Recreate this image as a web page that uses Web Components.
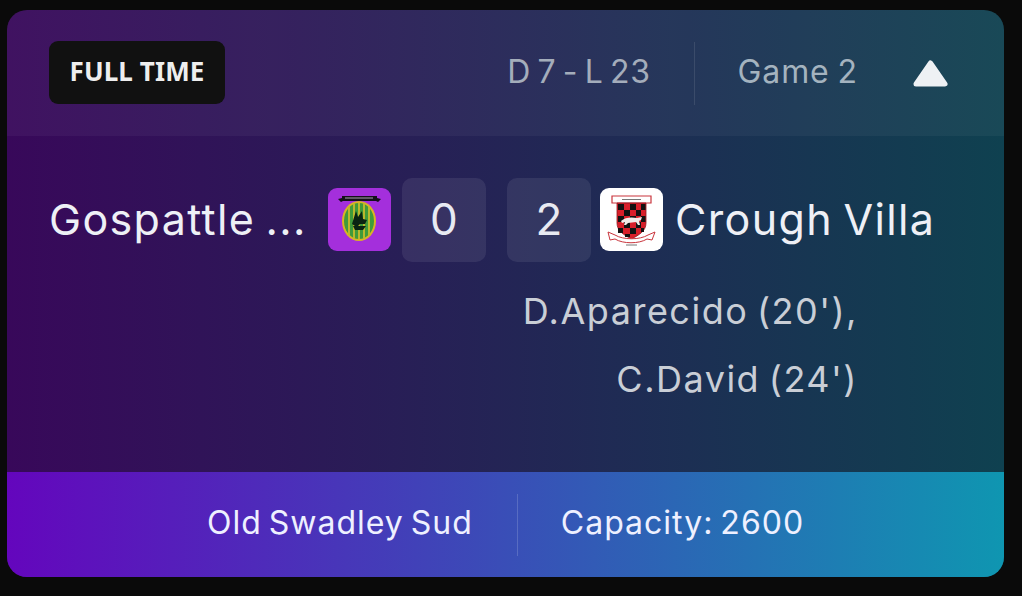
<!DOCTYPE html>
<html><head><meta charset="utf-8"><title>Match</title>
<style>
html,body{margin:0;height:100%;background:#0a0a0a}
body{padding:10px 18px 19px 7px;box-sizing:border-box;width:1022px;height:596px;overflow:hidden;font-family:Inter,"Liberation Sans",sans-serif}
</style></head><body>
<match-card>
  <match-header slot="header" status="FULL TIME" record="D 7 - L 23" game="Game 2"></match-header>
  <match-team slot="home" name="Gospattle ..." side="home"><home-crest></home-crest></match-team>
  <score-box slot="s1">0</score-box>
  <score-box slot="s2">2</score-box>
  <match-team slot="away" name="Crough Villa" side="away"><away-crest></away-crest></match-team>
  <span slot="scorers">D.Aparecido (20'),<br>C.David (24')</span>
  <match-footer slot="footer" venue="Old Swadley Sud" capacity="Capacity: 2600"></match-footer>
</match-card>
<script>
function def(name,html,attrs){
  customElements.define(name,class extends HTMLElement{
    connectedCallback(){
      if(this.shadowRoot)return;
      const r=this.attachShadow({mode:'open'});
      let h=html;
      for(const a of (attrs||[]))h=h.split('{{'+a+'}}').join(this.getAttribute(a)||'');
      r.innerHTML=h;
    }
  });
}
def('match-card',`<style>
:host{display:flex;flex-direction:column;height:567px;border-radius:20px;overflow:hidden;
background:linear-gradient(90deg,#38085a 0%,#0f4150 100%);color:#fff}
.mid{flex:1;display:flex;flex-direction:column;padding:42px 0 0 0;min-height:0}
.row{display:flex;align-items:center;height:84px}
.s{display:flex;gap:21px}
.scorers{margin:15px 146px 0 0;text-align:right;font-size:36px;line-height:68px;color:#c9ced6;letter-spacing:1.5px;word-spacing:-3px}
</style>
<slot name="header"></slot>
<div class="mid">
<div class="row"><slot name="home"></slot><div class="s"><slot name="s1"></slot><slot name="s2"></slot></div><slot name="away"></slot></div>
<div class="scorers"><slot name="scorers"></slot></div>
</div>
<slot name="footer"></slot>`);
def('match-header',`<style>
:host{display:flex;align-items:center;height:126px;box-sizing:border-box;padding:0 56px 0 42px;background:rgba(255,255,255,.045);flex:none}
.badge{width:176px;height:63px;margin-bottom:1px;box-sizing:border-box;padding-bottom:4px;background:#111;border-radius:9px;display:flex;align-items:center;justify-content:center;font:700 26px "Noto Sans",sans-serif;color:#eee;letter-spacing:.1px}
.rec{margin-left:auto;font-size:32px;color:#a4adbb;letter-spacing:.6px;word-spacing:-3px;padding-right:43px;height:63px;line-height:59px;border-right:1px solid rgba(255,255,255,.1)}
.game{font-size:32px;color:#a4b3bf;margin-left:43px;letter-spacing:.9px;word-spacing:-2px;line-height:59px;height:63px}
svg{margin-left:55px;display:block}
</style>
<div class="badge">{{status}}</div><div class="rec">{{record}}</div><div class="game">{{game}}</div>
<svg width="35" height="27" viewBox="0 0 35 27"><path d="M17.5 3 32 24H3Z" fill="#eef1f4" stroke="#eef1f4" stroke-width="5" stroke-linejoin="round"/></svg>`,['status','record','game']);
def('match-team',`<style>
:host{display:flex;align-items:center;gap:12px;font-size:43px;color:#eef0f6;letter-spacing:1.35px;word-spacing:-3px;white-space:nowrap}
:host([side=home]){width:395px;box-sizing:border-box;padding-left:42px;justify-content:space-between;padding-right:11px}
:host([side=away]){margin-left:9px}
span{padding-bottom:3px}
</style><span>{{name}}</span><slot></slot>`,['name','side']);
def('score-box',`<style>
:host{display:flex;align-items:center;justify-content:center;width:84px;height:84px;box-sizing:border-box;padding-bottom:2px;border-radius:10px;background:rgba(255,255,255,.08);font-size:44px;color:#e8eaf2}
</style><slot></slot>`);
def('home-crest',`<style>:host{display:block;width:63px;height:63px;margin-bottom:1px}svg{display:block}</style>
<svg width="63" height="63" viewBox="0 0 63 63">
<rect width="63" height="63" rx="9" fill="#a42fdc"/>
<ellipse cx="31" cy="33" rx="17" ry="20" fill="#d9b424"/>
<ellipse cx="31" cy="33" rx="15" ry="18" fill="#3f9a3a"/>
<path d="M21 19v28M26 15.500v35M31 15v36M36 15.500v35M41 19v28" stroke="#b9b82c" stroke-width="2"/>
<path d="M24 36l4-13 2 6 4-6 1 8 4 1-2 4h-5l-2 2h-3z" fill="#0b2412"/>
<path d="M25 38h13l-3 4H27z" fill="#0b2412"/>
<path d="M10 11l4-1V8l35 0v2l4 1-3 3-2-1H15l-2 1z" fill="#14101a"/>
<path d="M17 10h28" stroke="#cfc8d8" stroke-width=".8"/>
</svg>`);
def('away-crest',`<style>:host{display:block;width:63px;height:63px;order:-1;margin-bottom:1px}svg{display:block}</style>
<svg width="63" height="63" viewBox="0 0 63 63">
<rect width="63" height="63" rx="9" fill="#fff"/>
<path d="M12 8h39v7H12z" fill="#fff" stroke="#c9343c" stroke-width="1.200"/>
<path d="M22 11.500h19" stroke="#777" stroke-width="1"/>
<path d="M17 15h29v20c0 8-7 12-14.500 16C24 47 17 43 17 35z" fill="#d81f2a" stroke="#8a1620" stroke-width=".8"/>
<g fill="#121212">
<rect x="18" y="16" width="6" height="6"/><rect x="30" y="16" width="6" height="6"/><rect x="41" y="16" width="4.500" height="6"/>
<rect x="24" y="22" width="6" height="6"/><rect x="36" y="22" width="5" height="6"/>
<rect x="18" y="28" width="6" height="6"/><rect x="30" y="28" width="6" height="6"/><rect x="41" y="28" width="4.500" height="6"/>
<rect x="24" y="34" width="6" height="6"/><rect x="36" y="34" width="5" height="6"/>
<rect x="18" y="40" width="5" height="5"/><rect x="30" y="40" width="6" height="6"/><rect x="41" y="40" width="3" height="4"/>
<rect x="25" y="46" width="5" height="3"/>
</g>
<path d="M21 33c4-4 11-4 16-3l5-1-1 3-2 1 1 4h-2l-2-3-8 1-2 2h-2l1-3-3 1z" fill="#f3ebe8"/>
<path d="M8 44l7 3c8 5 25 5 33 0l7-3-3 8-5-1c-8 5-24 5-32 0l-5 1z" fill="#fff" stroke="#c9343c" stroke-width="1"/>
<path d="M26 57h11" stroke="#777" stroke-width="1"/>
</svg>`);
def('match-footer',`<style>
:host{display:flex;align-items:center;justify-content:center;height:105px;flex:none;background:linear-gradient(90deg,#6406bd 0%,#0f96b1 100%);font-size:32px;color:#eef0ff;letter-spacing:1px;word-spacing:-3px}
.a{padding-right:44px;height:62px;line-height:58px;border-right:1px solid rgba(255,255,255,.16)}
.b{padding-left:43px;line-height:58px;height:62px}
</style><div class="a">{{venue}}</div><div class="b">{{capacity}}</div>`,['venue','capacity']);
</script>
</body></html>
